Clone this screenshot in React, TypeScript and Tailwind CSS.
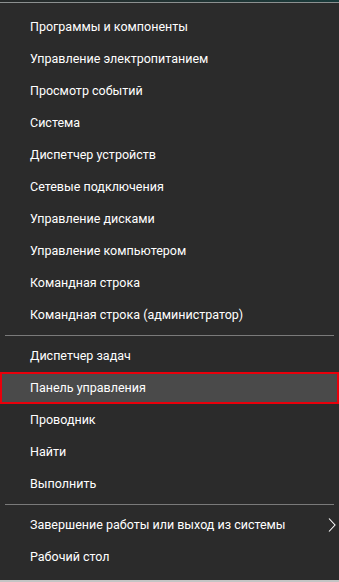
const groups: string[][] = [
  [
    'Программы и компоненты',
    'Управление электропитанием',
    'Просмотр событий',
    'Система',
    'Диспетчер устройств',
    'Сетевые подключения',
    'Управление дисками',
    'Управление компьютером',
    'Командная строка',
    'Командная строка (администратор)',
  ],
  ['Диспетчер задач', 'Панель управления', 'Проводник', 'Найти', 'Выполнить'],
  ['Завершение работы или выход из системы', 'Рабочий стол'],
]

function Item({ label, active, submenu }: { label: string; active?: boolean; submenu?: boolean }) {
  return (
    <div
      className={
        active
          ? 'relative flex h-[32px] items-center border-2 border-[#e8000b] bg-[#4a4a4a] pl-[28px]'
          : 'relative flex h-[32px] items-center pl-[30px]'
      }
    >
      <span className="text-[12.5px] leading-none text-white">{label}</span>
      {submenu && (
        <svg className="absolute right-[3px] top-[9px]" width="8" height="14" viewBox="0 0 8 14">
          <path d="M1 0.5 L7 7 L1 13.5" fill="none" stroke="#ffffff" strokeWidth="1.1" />
        </svg>
      )}
    </div>
  )
}

export default function App() {
  return (
    <div className="flex h-[582px] w-[339px] flex-col bg-[#2b2b2b]" style={{ fontFamily: 'Roboto, "Noto Sans", sans-serif' }}>
      <div className="h-[2px] bg-gradient-to-r from-[#262929] to-[#183a3a]" />
      <div className="h-[1px] bg-[#8c9090]" />
      <div className="flex flex-1 flex-col pt-[8px]">
        {groups.map((group, gi) => (
          <div key={gi}>
            {gi > 0 && (
              <div className="flex h-[9px] items-center px-[5px]">
                <div className="h-[1px] w-full bg-[#7a7a7a]" />
              </div>
            )}
            {group.map((label) => (
              <Item
                key={label}
                label={label}
                active={label === 'Панель управления'}
                submenu={label.startsWith('Завершение')}
              />
            ))}
          </div>
        ))}
      </div>
      <div className="h-[2px] bg-[#c4c4c4]" />
    </div>
  )
}
